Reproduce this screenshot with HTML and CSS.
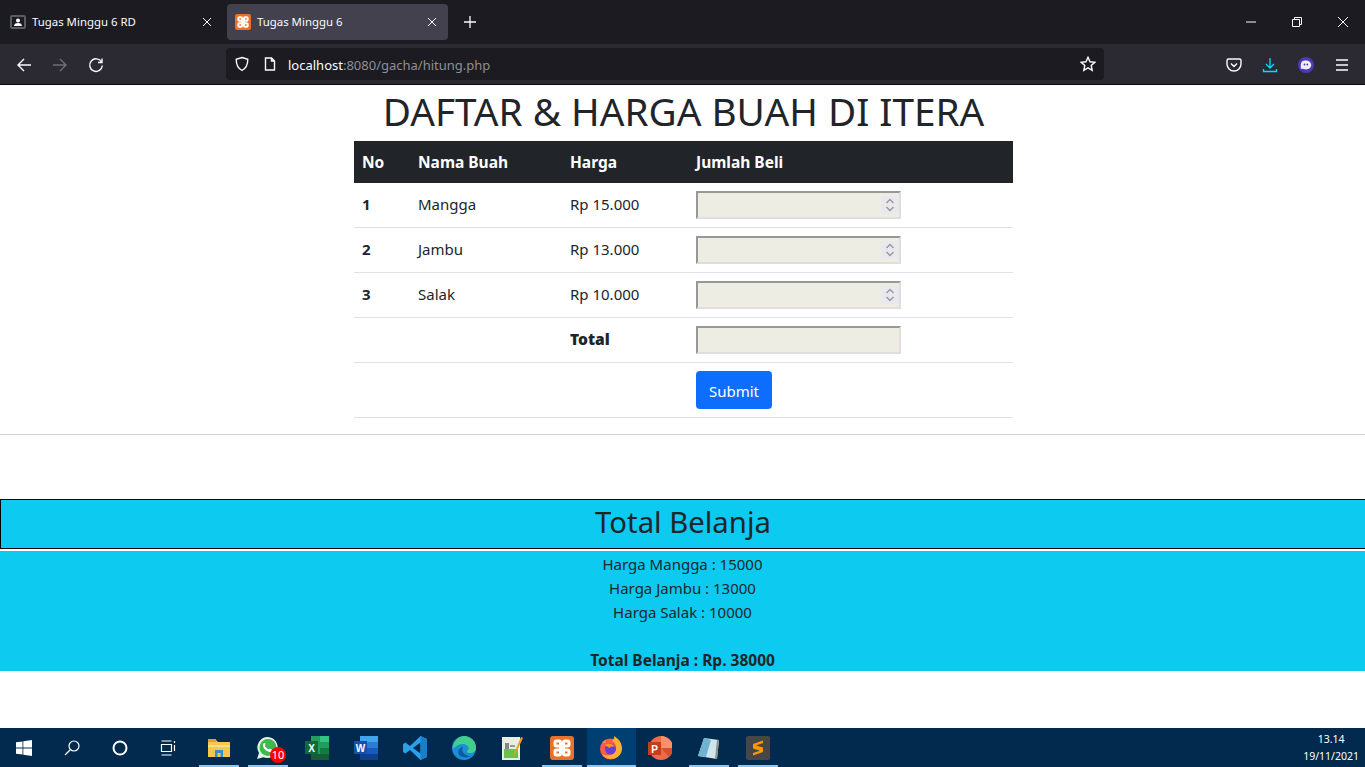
FILE: index.html
```html
<!DOCTYPE html>
<html lang="id">
<head>
  <meta charset="UTF-8">
  <title>Tugas Minggu 6</title>
  <link rel="stylesheet" href="styles.css">
</head>
<body>
  <header class="browser">
    <div class="tabbar">
      <div class="tab">
        <svg class="favicon" viewBox="0 0 16 16"><rect x="0" y="1" width="16" height="14" rx="2" fill="#5a5c64"/><rect x="2" y="3" width="12" height="10" fill="#1c1b22"/><circle cx="8" cy="6.500" r="2" fill="#fff"/><path d="M4 12c.4-2.400 2-3 4-3s3.600.6 4 3z" fill="#fff"/></svg>
        <span class="tab-title">Tugas Minggu 6 RD</span>
        <svg class="tab-close" viewBox="0 0 10 10"><path d="M1 1l8 8M9 1l-8 8"/></svg>
      </div>
      <div class="tab tab-active">
        <svg class="favicon" viewBox="0 0 24 24"><rect width="24" height="24" rx="3" fill="#e9722a"/><g class="xampp-ring"><rect x="5" y="5" width="5.500" height="5" rx="1.500"/><rect x="13.500" y="5" width="5.500" height="5" rx="1.500"/><rect x="5" y="14" width="5.500" height="5" rx="1.500"/><rect x="13.500" y="14" width="5.500" height="5" rx="1.500"/></g><rect x="9" y="9.500" width="6" height="5" fill="#fff"/></svg>
        <span class="tab-title">Tugas Minggu 6</span>
        <svg class="tab-close" viewBox="0 0 10 10"><path d="M1 1l8 8M9 1l-8 8"/></svg>
      </div>
      <svg class="new-tab" viewBox="0 0 12 12"><path d="M6 0v12M0 6h12"/></svg>
      <div class="window-btns">
        <svg viewBox="0 0 12 12"><path d="M1 6h10"/></svg>
        <svg viewBox="0 0 12 12"><path d="M1.500 3.500h7v7h-7zM3.500 3.500v-2h7v7h-2"/></svg>
        <svg viewBox="0 0 12 12"><path d="M1 1l10 10M11 1L1 11"/></svg>
      </div>
    </div>
    <div class="toolbar">
      <div class="nav-btns">
        <svg viewBox="0 0 16 16"><path d="M15 8H2M8 2L2 8l6 6"/></svg>
        <svg class="disabled" viewBox="0 0 16 16"><path d="M1 8h13M8 2l6 6-6 6"/></svg>
        <svg viewBox="0 0 16 16"><path d="M13.500 5A6.300 6.300 0 1 0 14.300 8.500M14 1.500V5.500H10"/></svg>
      </div>
      <div class="urlbar">
        <svg class="url-shield" viewBox="0 0 16 16"><path d="M8 1.500l5.800 1.800c0 5-1.500 9-5.800 11.200C3.700 12.300 2.200 8.300 2.200 3.300z"/></svg>
        <svg class="url-page" viewBox="0 0 14 14"><path d="M2.500 1h6l3 3v9h-9zM8.500 1v3h3"/></svg>
        <span class="url-text">localhost<span class="url-muted">:8080/gacha/hitung.php</span></span>
        <svg class="url-star" viewBox="0 0 16 16"><path d="M8 1.300l2 4.500 4.800.5-3.600 3.200 1 4.800L8 11.900l-4.200 2.400 1-4.800L1.200 6.300 6 5.800z"/></svg>
      </div>
      <div class="tool-icons">
        <svg viewBox="0 0 16 16"><path class="ic-line" d="M2.500 2h11a1.500 1.500 0 0 1 1.500 1.500V7A7 7 0 0 1 1 7V3.500A1.500 1.500 0 0 1 2.500 2zM5 6.500l3 3 3-3"/></svg>
        <svg viewBox="0 0 16 16"><path class="ic-cyan" d="M8 1v9.500M4 7l4 4 4-4M1.500 12v2.500h13V12"/></svg>
        <svg viewBox="0 0 16 16"><circle cx="8" cy="8" r="8" fill="#4a3bb5"/><path d="M2.800 12V7.500a4.500 4.500 0 0 1 4.700-4c3.400 0 5.700 2 5.700 4.500 0 2.800-2.300 4.400-5.200 4.400-1.700 0-3.500-.9-5.200-.4z" fill="#f1eefc"/><circle cx="6.500" cy="7.500" r=".9" fill="#4a3bb5"/><circle cx="9.300" cy="7.500" r=".9" fill="#4a3bb5"/></svg>
        <svg viewBox="0 0 16 16"><path class="ic-line" d="M2 3h12M2 8h12M2 13h12"/></svg>
      </div>
    </div>
  </header>

  <main class="page">
    <h1 class="judul">DAFTAR &amp; HARGA BUAH DI ITERA</h1>
    <table class="tabel-buah">
      <thead>
        <tr><th class="kol-no">No</th><th class="kol-nama">Nama Buah</th><th class="kol-harga">Harga</th><th>Jumlah Beli</th></tr>
      </thead>
      <tbody>
        <tr>
          <th>1</th><td>Mangga</td><td>Rp 15.000</td>
          <td class="sel-isian"><div class="isian"><span class="spinner"><svg viewBox="0 0 10 14"><path d="M1.500 5L5 1.500 8.500 5M1.500 9L5 12.500 8.500 9"/></svg></span></div></td>
        </tr>
        <tr>
          <th>2</th><td>Jambu</td><td>Rp 13.000</td>
          <td class="sel-isian"><div class="isian"><span class="spinner"><svg viewBox="0 0 10 14"><path d="M1.500 5L5 1.500 8.500 5M1.500 9L5 12.500 8.500 9"/></svg></span></div></td>
        </tr>
        <tr>
          <th>3</th><td>Salak</td><td>Rp 10.000</td>
          <td class="sel-isian"><div class="isian"><span class="spinner"><svg viewBox="0 0 10 14"><path d="M1.500 5L5 1.500 8.500 5M1.500 9L5 12.500 8.500 9"/></svg></span></div></td>
        </tr>
        <tr>
          <td></td><td></td><th class="label-total">Total</th>
          <td class="sel-isian"><div class="isian"></div></td>
        </tr>
        <tr>
          <td></td><td></td><td></td>
          <td class="sel-isian"><button class="btn-submit" type="button">Submit</button></td>
        </tr>
      </tbody>
    </table>
    <hr class="garis">
    <h2 class="total-judul">Total Belanja</h2>
    <div class="total-isi">
      Harga Mangga : 15000<br>
      Harga Jambu : 13000<br>
      Harga Salak : 10000<br>
      <br>
      <b class="total-akhir">Total Belanja : Rp. 38000</b>
    </div>
  </main>

  <footer class="taskbar">
    <div class="task-item task-sys"><svg viewBox="0 0 16 16"><path fill="#fff" d="M0 2.300l6.500-.9v6.200H0zM7.300 1.300L16 0v7.600H7.300zM0 8.400h6.500v6.200L0 13.700zM7.300 8.400H16V16l-8.700-1.200z"/></svg></div>
    <div class="task-item task-sys"><svg viewBox="0 0 16 16"><circle cx="10" cy="6" r="5" fill="none" stroke="#fff" stroke-width="1.200"/><path d="M6.500 9.500L1 15" stroke="#fff" stroke-width="1.300"/></svg></div>
    <div class="task-item task-sys"><svg viewBox="0 0 16 16"><circle cx="8" cy="8" r="6.500" fill="none" stroke="#fff" stroke-width="2"/></svg></div>
    <div class="task-item task-sys"><svg viewBox="0 0 16 16"><path d="M1.500 1h10M1.500 15h10M1.500 4.500h10v7h-10zM14.500 1v2M14.500 5v6" fill="none" stroke="#fff" stroke-width="1.200"/></svg></div>

    <div class="task-item task-first task-run"><svg class="app" viewBox="0 0 24 24"><path d="M1 4h8l2 2h12v15H1z" fill="#f5c84c"/><path d="M1 3h8v3H1z" fill="#d9a32e"/><path d="M8 21v-7h8v7h-2.500v-4h-3v4z" fill="#2f8fd8"/><path d="M1 9h22v2H1z" fill="#fbe08a"/></svg></div>
    <div class="task-item task-run task-wa"><svg class="app" viewBox="0 0 24 24"><path d="M12 1a10.500 10.500 0 0 0-9 16L1 23l6.300-1.800A10.500 10.500 0 1 0 12 1z" fill="#dff5e4"/><circle cx="12" cy="11.500" r="8.500" fill="#3fb94e"/><path d="M8.500 7c2 0-.3 2.500 1 4s3.500 3 4 2 3.500.5 3 2c-.8 1.800-4 1.500-7-1-2.800-2.500-3.500-6.500-1-7z" fill="#fff"/></svg><span class="badge">10</span></div>
    <div class="task-item"><svg class="app" viewBox="0 0 24 24"><path d="M6 0h18v24H6z" fill="#1f9e5f"/><path d="M15 0h9v6h-9z" fill="#33c481"/><path d="M6 18h18v6H6z" fill="#185c37"/><path d="M15 12h9v6h-9z" fill="#107c41"/><rect y="5" width="13" height="13" fill="#0f6b39"/><text class="app-letter" x="6.500" y="15.500">X</text></svg></div>
    <div class="task-item"><svg class="app" viewBox="0 0 24 24"><path d="M6 0h18v24H6z" fill="#2b7cd3"/><path d="M6 0h18v6H6z" fill="#41a5ee"/><path d="M6 12h18v6H6z" fill="#185abd"/><path d="M6 18h18v6H6z" fill="#103f91"/><rect y="5" width="13" height="13" fill="#1550ae"/><text class="app-letter" x="6.500" y="15.500">W</text></svg></div>
    <div class="task-item"><svg class="app" viewBox="0 0 24 24"><path d="M17.500 0L24 3v18l-6.500 3L7 14l-4.500 3.500L0 16V8l2.500-1.500L7 10z" fill="#2aa0ea"/><path d="M17.500 6.500L10 12l7.500 5.500z" fill="#012a4e"/><path d="M17.500 0L24 3v18l-6.500 3z" fill="#1a7fc9"/></svg></div>
    <div class="task-item"><svg class="app" viewBox="0 0 24 24"><circle cx="12" cy="12" r="12" fill="#1a8fd6"/><path d="M12 0a12 12 0 0 1 12 12c0 3.500-3 5-6 5-4 0-3-3-1-4 0-3-3.500-5-6-5-4 0-8 2-10 5A12 12 0 0 1 12 0z" fill="#41d08a"/><path d="M8 20c-3-3-2-8 3-9-2 3 0 8 6 9 1 0 2 0 3-.5A12 12 0 0 1 8 20z" fill="#0c59a4"/></svg></div>
    <div class="task-item"><svg class="app" viewBox="0 0 24 24"><rect x="1" y="1" width="18" height="23" fill="#e9efe0"/><rect x="3" y="13" width="14" height="9" fill="#6cc04a"/><path d="M5 7v6M7 7v6M9 10h5" stroke="#444" stroke-width="1.200"/><path d="M22 2l-7 15-2 3 .500-4L20 1z" fill="#e3a32b"/></svg></div>
    <div class="task-item task-run"><svg class="app" viewBox="0 0 24 24"><rect width="24" height="24" rx="3" fill="#e9722a"/><g class="xampp-ring"><rect x="5" y="5" width="5.500" height="5" rx="1.500"/><rect x="13.500" y="5" width="5.500" height="5" rx="1.500"/><rect x="5" y="14" width="5.500" height="5" rx="1.500"/><rect x="13.500" y="14" width="5.500" height="5" rx="1.500"/></g><rect x="9" y="9.500" width="6" height="5" fill="#fff"/></svg></div>
    <div class="task-item task-run task-active"><svg class="app" viewBox="0 0 24 24"><circle cx="11.500" cy="13" r="10.500" fill="#ff5a4a"/><path d="M15 0c5 3 8 7 8 12.500 0 6-5 10.500-11 10.500-4 0-7-2-9-5 6 3 13 1 14-5 .5-4-1.500-7-4-8.500C14.500 3.500 15.500 2 15 0z" fill="#ffb02e"/><path d="M3 7c1-1.500 2-2.500 4-3.500-.5 1.500-.5 2.500 0 3.500z" fill="#ff8a3c"/><circle cx="11.500" cy="13" r="5.500" fill="#6a3ed8"/><path d="M6 9c3-2 8-1.500 10 2-2-.8-4-.5-5.500 1z" fill="#ff980e"/></svg></div>
    <div class="task-item"><svg class="app" viewBox="0 0 24 24"><circle cx="13" cy="12" r="12" fill="#ed6c47"/><path d="M13 0a12 12 0 0 1 12 12H13z" fill="#ff8f6b"/><path d="M13 12h12a12 12 0 0 1-4 9z" fill="#d35230"/><rect y="6" width="13" height="13" fill="#c43e1c"/><text class="app-letter" x="6.500" y="16.500">P</text></svg></div>
    <div class="task-item task-run"><svg class="app" viewBox="0 0 24 24"><path d="M7 2l15 2-2 19L1 20z" fill="#cfe6ef"/><path d="M7 2L1 20l8 1 5-17z" fill="#6fb3cf"/><path d="M20 4l2 0-2 19-2 0z" fill="#8e8f86"/></svg></div>
    <div class="task-item task-run"><svg class="app" viewBox="0 0 24 24"><rect width="24" height="24" rx="2" fill="#464646"/><path d="M17 4.500L7 8v4.500l7 2.200L7 17v2.500L17 16v-4.500L10 9.500 17 7z" fill="#ff9800"/></svg></div>
    <div class="jam">13.14<br>19/11/2021</div>
  </footer>
</body>
</html>
```

FILE: styles.css
```css
html, body {
  margin: 0;
  height: 767px;
  overflow: hidden;
}
body {
  display: flex;
  flex-direction: column;
  font-family: "Noto Sans", "Open Sans", Arial, sans-serif;
  font-size: 15px;
  line-height: 24px;
  color: #212529;
  background: #fff;
}

/* browser */
.browser {
  flex: none;
  background: #2b2a33;
  border-bottom: 1px solid #0c0c0d;
}
.tabbar {
  display: flex;
  align-items: center;
  height: 44px;
  padding-left: 2px;
  background: #1c1b22;
  color: #fbfbfe;
}
.tab {
  display: flex;
  align-items: center;
  width: 221px;
  height: 36px;
  margin-right: 4px;
  padding: 0 8px;
  box-sizing: border-box;
  border-radius: 4px;
  font-size: 11.4px;
}
.tab-active { background: #42414d; }
.favicon {
  width: 16px;
  height: 16px;
  margin-right: 6px;
}
.tab-title { flex: 1; }
.tab-close {
  width: 10px;
  height: 10px;
  margin-right: 3px;
}
.tab-close path, .new-tab path, .window-btns path {
  fill: none;
  stroke: #fbfbfe;
  stroke-width: 1;
}
.new-tab {
  width: 12px;
  height: 12px;
  margin-left: 12px;
}
.new-tab path { stroke-width: 1.3; }
.window-btns {
  display: flex;
  gap: 34px;
  margin-left: auto;
  padding-right: 16px;
}
.window-btns svg {
  width: 12px;
  height: 12px;
}
.toolbar {
  display: flex;
  align-items: center;
  height: 40px;
  padding-top: 1px;
  box-sizing: border-box;
}
.nav-btns {
  display: flex;
  gap: 20px;
  width: 226px;
  padding-left: 16px;
  box-sizing: border-box;
}
.nav-btns svg {
  width: 16px;
  height: 16px;
}
.nav-btns path, .url-shield, .url-page, .url-star, .ic-line {
  fill: none;
  stroke: #fbfbfe;
  stroke-width: 1.4;
}
.nav-btns .disabled path { stroke: #6f6e75; }
.urlbar {
  display: flex;
  align-items: center;
  width: 878px;
  height: 32px;
  margin-top: -1px;
  padding: 0 8px;
  box-sizing: border-box;
  background: #1c1b22;
  border-radius: 4px;
  color: #fbfbfe;
  font-size: 13px;
}
.url-shield {
  width: 16px;
  height: 16px;
  margin-right: 13px;
}
.url-page {
  width: 14px;
  height: 14px;
  margin-right: 11px;
}
.url-text {
  flex: 1;
  padding-top: 1px;
}
.url-muted { color: #8f8f94; }
.url-star {
  width: 16px;
  height: 16px;
}
.tool-icons {
  display: flex;
  gap: 20px;
  margin-left: 122px;
}
.tool-icons svg {
  width: 16px;
  height: 16px;
}
.ic-cyan {
  fill: none;
  stroke: #00ddff;
  stroke-width: 1.3;
}

/* isi halaman */
.page {
  flex: 1;
  min-height: 0;
  text-align: center;
}
.judul {
  height: 48px;
  margin: 0 0 8px;
  padding-left: 2px;
  font-size: 38.7px;
  line-height: 53px;
  font-weight: 400;
}
.tabel-buah {
  width: 659px;
  margin-left: 354px;
  border-collapse: collapse;
  text-align: left;
}
.tabel-buah th, .tabel-buah td {
  padding: 8px 8px 10px;
  border-bottom: 1px solid #dee2e6;
  vertical-align: middle;
}
.tabel-buah th { font-weight: 700; }
.tabel-buah thead th {
  height: 25px;
  padding: 8px;
  color: #fff;
  background: #212529;
  border-bottom-color: #212529;
  font-size: 15.5px;
}
.tabel-buah .sel-isian { padding: 8px; }
.kol-no { width: 40px; }
.kol-nama { width: 136px; }
.kol-harga { width: 110px; }
.tabel-buah .label-total {
  padding: 8px 8px 10px;
  font-size: 15.5px;
  font-weight: 900;
}
.isian {
  display: flex;
  align-items: center;
  justify-content: flex-end;
  width: 205px;
  height: 28px;
  box-sizing: border-box;
  background: #edede4;
  border: 2px solid #dedede;
  border-top-color: #979797;
  border-left-color: #979797;
}
.spinner {
  display: flex;
  align-items: center;
  justify-content: center;
  width: 18px;
  height: 18px;
  background: #e9e9ed;
}
.spinner svg {
  width: 10px;
  height: 14px;
}
.spinner path {
  fill: none;
  stroke: #97979c;
  stroke-width: 1.4;
}
.btn-submit {
  display: block;
  width: 76px;
  height: 38px;
  padding: 2px 0 0;
  border: 0;
  border-radius: 4px;
  background: #0d6efd;
  color: #fff;
  font: inherit;
}
.garis {
  height: 1px;
  margin: 16px 0 0;
  border: 0;
  background: #cfcfcf;
}
.total-judul {
  margin: 64px 0 2px;
  height: 48px;
  background: #0dcaf0;
  border: 1px solid #000;
  border-right: 0;
  font-size: 29.3px;
  line-height: 44px;
  font-weight: 400;
}
.total-isi {
  height: 120px;
  padding-top: 1px;
  box-sizing: border-box;
  background: #0dcaf0;
}
.total-akhir { font-size: 15.5px; }

/* taskbar */
.taskbar {
  flex: none;
  display: flex;
  height: 39px;
  background: #012a4e;
  color: #fff;
}
.task-item {
  position: relative;
  display: flex;
  align-items: center;
  justify-content: center;
  width: 49px;
  box-sizing: border-box;
}
.task-sys { width: 48px; }
.task-sys svg {
  width: 16px;
  height: 16px;
}
.task-first { margin-left: 3px; }
.task-run::after {
  content: "";
  position: absolute;
  left: 4px;
  right: 5px;
  bottom: 0;
  height: 2px;
  background: #8ec6ec;
}
.task-active { background: #003f72; }
.task-active::after {
  left: 0;
  right: 0;
}
.app {
  width: 24px;
  height: 24px;
  margin-left: -1px;
}
.app-letter {
  fill: #fff;
  font-family: "Liberation Sans", Arial, sans-serif;
  font-size: 10px;
  font-weight: 700;
  text-anchor: middle;
}
.xampp-ring rect {
  fill: none;
  stroke: #fff;
  stroke-width: 3;
}
.badge {
  position: absolute;
  left: 26px;
  bottom: 4px;
  width: 16px;
  height: 16px;
  border-radius: 50%;
  background: #f00;
  color: #fff;
  font-size: 11px;
  line-height: 16px;
  text-align: center;
}
.jam {
  margin-left: auto;
  padding: 3px 6px 0 0;
  font-size: 10.5px;
  line-height: 17px;
  text-align: center;
}
```
